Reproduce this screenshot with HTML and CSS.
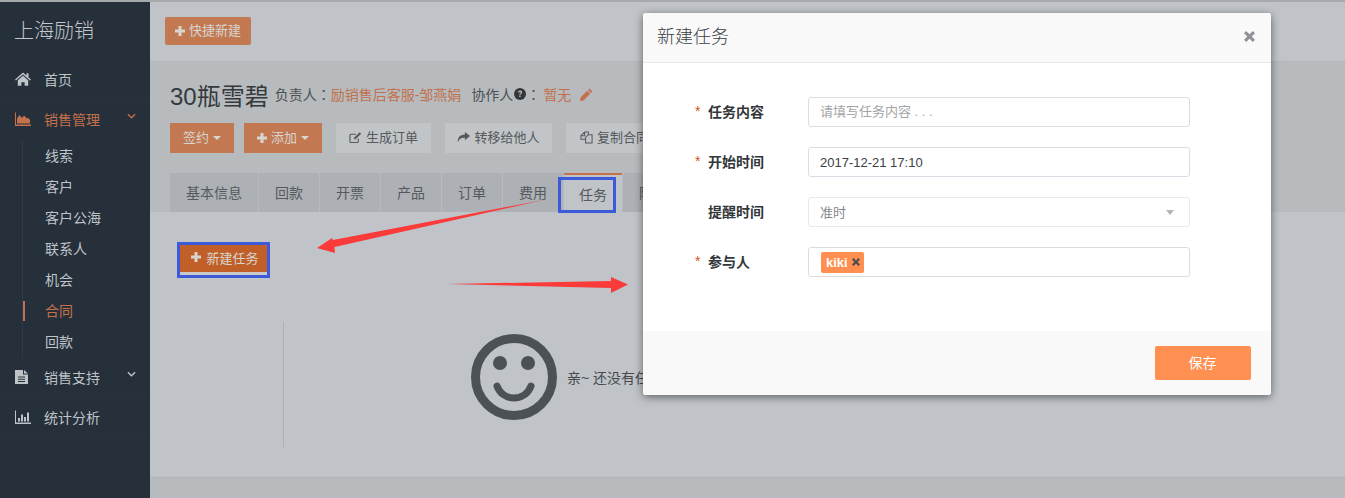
FILE: index.html
```html
<!DOCTYPE html>
<html>
	<head>
		<meta charset="utf-8">
		<title>新建任务</title>
		<link rel="stylesheet" href="styles.css">
	</head>

	<body>
		<div class="app">
			<div class="sidebar">
				<div class="brand">上海励销</div>
				<div class="navItem">
					<svg class="navIcon" viewBox="0 0 16 14"><path d="M8 .5 0 7.6l.9 1L8 2.4l7.100 6.200.9-1-2.500-2.200V1.200h-2v2.200z"/><path d="M2.800 8.300 8 3.800l5.200 4.500v5.400H9.600v-3.500H6.400v3.500H2.800z"/></svg>
					首页
				</div>
				<div class="navItem active">
					<svg class="navIcon" viewBox="0 0 16 14"><path d="M0 .5h1v12h15V14H0z"/><path d="M2 11.500V6.500l2.500-3.500 2.500 3L9 3.500l3 3 1-.8 2 2.300v3.500z"/></svg>
					销售管理
					<svg class="chevron" viewBox="0 0 10 6"><path d="M1 1l4 4 4-4" fill="none" stroke="currentColor" stroke-width="1.500"/></svg>
				</div>
				<div class="subNav">
					<div class="subItem">线索</div>
					<div class="subItem">客户</div>
					<div class="subItem">客户公海</div>
					<div class="subItem">联系人</div>
					<div class="subItem">机会</div>
					<div class="subItem current">合同</div>
					<div class="subItem">回款</div>
				</div>
				<div class="navItem">
					<svg class="navIcon docIcon" viewBox="0 0 13 14"><path fill-rule="evenodd" d="M0 0h8v4.500h5V14H0zM3 6.500v1h7v-1zM3 8.700v1h7v-1zM3 10.900v1h7v-1z"/><path d="M9 0l4 3.500H9z"/></svg>
					销售支持
					<svg class="chevron" viewBox="0 0 10 6"><path d="M1 1l4 4 4-4" fill="none" stroke="currentColor" stroke-width="1.500"/></svg>
				</div>
				<div class="navItem">
					<svg class="navIcon" viewBox="0 0 16 14"><path d="M0 .5h1v12h15V14H0z"/><path d="M3 8h2v3.500H3zM6 4.500h2v7H6zM9 7h2v4.500H9zM12 2.500h2v9h-2z"/></svg>
					统计分析
				</div>
			</div>

			<div class="main">
				<div class="topbar">
					<button class="btn btnOrange quick">
						<svg class="plus" viewBox="0 0 10 10"><path d="M3.500 0h3v3.500H10v3H6.500V10h-3V6.500H0v-3h3.500z"/></svg>
						快捷新建
					</button>
				</div>

				<div class="detailHead">
					<div class="titleRow">
						<span class="title">30瓶雪碧</span>
						<span class="meta">负责人<span class="colon">：</span></span><span class="metaLink">励销售后客服-邹燕娟</span>
						<span class="meta helper">协作人</span>
						<svg class="help" viewBox="0 0 14 14"><circle cx="7" cy="7" r="7"/><path d="M4.600 5.300C4.700 3.800 5.700 3 7.100 3c1.400 0 2.400.8 2.400 2 0 1-.6 1.500-1.300 1.900-.5.300-.6.500-.6 1.100H6.100c0-1 .3-1.500 1-2 .5-.3.800-.5.800-.9 0-.4-.3-.7-.8-.7s-.9.300-.9.900zM6.100 8.800h1.600v1.700H6.100z" fill="#b7bbbe"/></svg>
						<span class="meta colon">：</span>
						<span class="metaLink none">暂无</span>
						<svg class="pencil" viewBox="0 0 13 13"><path d="M9.500.5l3 3-1.500 1.500-3-3zM7.200 2.800l3 3L3.500 12.500l-3.500.5.500-3.500z"/></svg>
					</div>

					<div class="actions">
						<button class="btn btnOrange sign">签约<i class="caret"></i></button>
						<button class="btn btnOrange add">
							<svg class="plus" viewBox="0 0 10 10"><path d="M3.500 0h3v3.500H10v3H6.500V10h-3V6.500H0v-3h3.500z"/></svg>
							添加<i class="caret"></i>
						</button>
						<button class="btn btnGrey order">
							<svg class="btnIcon" viewBox="0 0 14 13"><path d="M10 7.500v3.200c0 .7-.5 1.200-1.200 1.200H2.200C1.500 11.900 1 11.400 1 10.700V4.200C1 3.500 1.500 3 2.200 3h5.300" fill="none" stroke="currentColor" stroke-width="1.200"/><path d="M11.500.8l1.600 1.600-5.800 5.800-2.100.5.500-2.100z"/></svg>
							生成订单
						</button>
						<button class="btn btnGrey transfer">
							<svg class="btnIcon" viewBox="0 0 14 12"><path d="M8.500 0L14 4.500 8.500 9V6.300C4.500 6.300 2.200 7.300 1 11.500.2 6 3 2.900 8.500 2.700z"/></svg>
							转移给他人
						</button>
						<button class="btn btnGrey copy">
							<svg class="btnIcon" viewBox="0 0 14 14"><path d="M5 1h4v3h4v9H6V9H1V5z M5 1v4H1 M9 4L6 7v2" fill="none" stroke="currentColor" stroke-width="1.100"/></svg>
							复制合同
						</button>
					</div>

					<div class="tabs">
						<div class="tab wide">基本信息</div>
						<div class="tab">回款</div>
						<div class="tab">开票</div>
						<div class="tab">产品</div>
						<div class="tab">订单</div>
						<div class="tab">费用</div>
						<div class="tab selected">任务</div>
						<div class="tab">附件</div>
					</div>
				</div>

				<div class="content">
					<button class="newTask">
						<svg class="plus" viewBox="0 0 10 10"><path d="M3.500 0h3v3.500H10v3H6.500V10h-3V6.500H0v-3h3.500z"/></svg>
						新建任务
					</button>
					<div class="emptyWrap">
						<div class="empty">
							<svg class="smile" viewBox="0 0 86 86">
								<circle cx="43" cy="43" r="38.500" fill="none" stroke="#4c5155" stroke-width="9"/>
								<circle cx="29" cy="29" r="7" fill="#4c5155"/>
								<circle cx="57" cy="29" r="7" fill="#4c5155"/>
								<path d="M26 52A18 18 0 0 0 60 52" fill="none" stroke="#4c5155" stroke-width="7" stroke-linecap="round"/>
							</svg>
							<span class="emptyText">亲~ 还没有任务哦</span>
						</div>
					</div>
				</div>

				<div class="footer"></div>
			</div>
		</div>

		<!-- red arrows and blue boxes drawn over the screenshot -->
		<svg class="arrows" viewBox="0 0 1345 498">
			<polygon points="546,199.500 333,240 332,238 317,248 335,253 334.500,247" fill="#fb3a3a"/>
			<polygon points="447,284 611,281 611,277 628,284.500 611,293 611,288" fill="#fb3a3a"/>
		</svg>
		<div class="mark markTab"></div>
		<div class="mark markBtn"></div>

		<div class="modal">
			<div class="modalHead">
				<span class="modalTitle">新建任务</span>
				<svg class="close" viewBox="0 0 11 11"><path d="M2.200 0L5.500 3.300 8.800 0 11 2.200 7.700 5.500 11 8.800 8.800 11 5.500 7.700 2.200 11 0 8.800 3.300 5.500 0 2.200z"/></svg>
			</div>
			<div class="modalBody">
				<label class="fieldLabel"><i class="star">*</i>任务内容</label>
				<input class="field hintField" type="text" placeholder="请填写任务内容 . . .">

				<label class="fieldLabel"><i class="star">*</i>开始时间</label>
				<input class="field" type="text" value="2017-12-21 17:10">

				<label class="fieldLabel"><i class="star"></i>提醒时间</label>
				<div class="field select">准时<i class="selectCaret"></i></div>

				<label class="fieldLabel"><i class="star">*</i>参与人</label>
				<div class="field people">
					<span class="tag">kiki
						<svg class="tagClose" viewBox="0 0 11 11"><path d="M2.200 0L5.500 3.300 8.800 0 11 2.200 7.700 5.500 11 8.800 8.800 11 5.500 7.700 2.200 11 0 8.800 3.300 5.500 0 2.200z"/></svg>
					</span>
				</div>
			</div>
			<div class="modalFoot">
				<button class="save">保存</button>
			</div>
		</div>
	</body>
</html>
```

FILE: styles.css
```css
html, body {
	margin: 0px;
	padding: 0px;
	overflow: hidden;
	height: 498px;
	font-family: "Liberation Sans", "Noto Sans CJK SC", sans-serif;
	font-size: 14px;
	color: #3c4043;
	background: #c0c4c8;
}

button {
	font-family: inherit;
	border: none;
	padding: 0px;
}

.app {
	display: flex;
	height: 496px;
	border-top: 2px solid #a6aaad;
}

/* sidebar */
.sidebar {
	width: 150px;
	flex: none;
	background: #26303b;
	color: #bfc4c9;
}

.brand {
	height: 58px;
	line-height: 59px;
	padding-left: 14px;
	font-size: 20px;
	font-weight: 300;
	color: #c4c8cc;
}

.navItem {
	position: relative;
	display: flex;
	align-items: center;
	height: 40px;
	padding: 0px 0px 2px 15px;
	border-bottom: 1px solid #29333e;
	box-sizing: border-box;
}

.navIcon {
	width: 16px;
	height: 14px;
	margin-right: 13px;
	fill: currentColor;
}

.docIcon {
	width: 13px;
	margin-right: 16px;
}

.navItem.active {
	color: #c4704a;
	border-bottom: none;
}

.chevron {
	width: 9px;
	height: 6px;
	margin: -6px 0px 0px 27px;
}

.subNav {
	margin-left: 22px;
	padding-top: 1px;
	border-left: 1px solid #2f3a46;
}

.subItem {
	position: relative;
	height: 31px;
	line-height: 30px;
	padding-left: 22px;
}

.subItem.current {
	color: #c4704a;
}

.subItem.current::before {
	content: "";
	position: absolute;
	left: 0px;
	top: 5px;
	width: 2px;
	height: 20px;
	background: #c4704a;
}

/* main column */
.main {
	flex: 1;
	display: flex;
	flex-direction: column;
	min-width: 0;
}

.topbar {
	flex: none;
	height: 60px;
	padding: 15px 0px 0px 15px;
	box-sizing: border-box;
	border-bottom: 1px solid #b3b7ba;
	background: #c0c4c8;
}

.btn {
	display: inline-flex;
	align-items: center;
	justify-content: center;
	height: 30px;
	padding-bottom: 3px;
	font-size: 13px;
	box-sizing: border-box;
}

.btn svg, .btn i {
	position: relative;
	top: 1px;
}

.btnOrange {
	background: #c27850;
	color: #d8d4d0;
}

.btnGrey {
	background: #c1c5c8;
	color: #55595c;
}

.quick {
	width: 86px;
	height: 28px;
	border-radius: 2px;
}

.plus {
	width: 10px;
	height: 10px;
	margin-right: 4px;
	fill: currentColor;
}

.detailHead {
	flex: none;
	height: 150px;
	padding: 16px 0px 0px 20px;
	box-sizing: border-box;
	background: #b7bbbe;
}

.titleRow {
	display: flex;
	align-items: center;
	height: 34px;
	padding-bottom: 2px;
	box-sizing: border-box;
	white-space: nowrap;
}

.title {
	font-size: 24px;
	margin-right: 6px;
	color: #35393c;
}

.meta {
	color: #4c5053;
}

/* TC face has the colon centred in its box */
.colon {
	font-family: "Noto Sans CJK TC", sans-serif;
}

.metaLink {
	color: #c2714e;
}

.helper {
	margin-left: 10px;
}

.help {
	width: 12px;
	height: 12px;
	margin-left: 1px;
	fill: #33373a;
}

.none {
	margin-left: 3px;
}

.pencil {
	width: 13px;
	height: 13px;
	margin-left: 9px;
	fill: #c2714e;
}

.actions {
	display: flex;
	margin-top: 11px;
	white-space: nowrap;
}

.sign {
	width: 64px;
	margin-right: 10px;
}

.add {
	width: 78px;
	margin-right: 14px;
}

.order {
	width: 95px;
	margin-right: 14px;
}

.transfer {
	width: 107px;
	margin-right: 14px;
}

.copy {
	width: 110px;
	justify-content: flex-start;
	padding-left: 14px;
}

.caret {
	width: 0px;
	height: 0px;
	margin-left: 4px;
	border-top: 4px solid currentColor;
	border-left: 4px solid transparent;
	border-right: 4px solid transparent;
}

.btnIcon {
	width: 13px;
	height: 13px;
	margin-right: 4px;
	fill: currentColor;
}

.tabs {
	display: flex;
	gap: 1px;
	margin-top: 20px;
}

.tab {
	width: 60px;
	height: 40px;
	line-height: 40px;
	text-align: center;
	background: #adb1b5;
	color: #55595c;
	box-sizing: border-box;
}

.tab.wide {
	width: 88px;
}

.tab.selected {
	width: 58px;
	line-height: 41px;
	background: #c0c4c8;
	border-top: 2px solid #c4704a;
}

.content {
	flex: 1;
	padding: 32px 0px 0px 30px;
	box-sizing: border-box;
	background: #c0c4c8;
}

.newTask {
	display: flex;
	align-items: center;
	justify-content: center;
	width: 87px;
	height: 28px;
	padding: 0px 0px 2px 3px;
	box-sizing: border-box;
	font-size: 13px;
	background: #c06028;
	color: #d8d4d0;
	box-shadow: 0px 3px 0px #c9c9c9;
}

.newTask .plus {
	margin-right: 5px;
}

.emptyWrap {
	height: 125px;
	margin: 50px 0px 0px 103px;
	border-left: 1px solid #adb1b4;
}

.empty {
	display: flex;
	align-items: center;
	padding: 12px 0px 0px 187px;
	white-space: nowrap;
}

.smile {
	width: 86px;
	height: 86px;
	flex: none;
}

.emptyText {
	margin-left: 10px;
	font-size: 14px;
	color: #45494c;
}

.footer {
	flex: none;
	height: 21px;
	box-sizing: border-box;
	border-top: 1px solid #afb3b6;
	background: #b7bbbe;
}

/* annotations on top of the page */
.arrows {
	position: absolute;
	left: 0px;
	top: 0px;
	width: 1345px;
	height: 498px;
}

.mark {
	position: absolute;
	border: 3px solid #3b5bdb;
	box-sizing: border-box;
}

.markTab {
	left: 558px;
	top: 177px;
	width: 58px;
	height: 36px;
}

.markBtn {
	left: 177px;
	top: 242px;
	width: 93px;
	height: 36px;
}

/* dialog */
.modal {
	position: absolute;
	left: 643px;
	top: 13px;
	width: 628px;
	height: 382px;
	display: flex;
	flex-direction: column;
	background: #fff;
	border-radius: 3px;
	box-shadow: 0px 2px 8px rgba(0,0,0,0.5);
	overflow: hidden;
}

.modalHead {
	display: flex;
	align-items: center;
	justify-content: space-between;
	flex: none;
	height: 50px;
	padding: 0px 16px 3px 14px;
	box-sizing: border-box;
	background: #f9f9f9;
	border-bottom: 1px solid #e5e7ea;
}

.modalTitle {
	font-size: 18px;
	font-weight: 300;
	color: #3c4043;
	margin-top: -3px;
}

.close {
	width: 11px;
	height: 11px;
	fill: #8f9397;
}

.modalBody {
	flex: 1;
	display: grid;
	grid-template-columns: 165px 382px;
	grid-auto-rows: 30px;
	row-gap: 20px;
	padding-top: 34px;
}

.fieldLabel {
	display: flex;
	align-items: center;
	padding: 0px 0px 2px 52px;
	font-weight: bold;
	color: #33373a;
}

.star {
	width: 13px;
	font-style: normal;
	font-weight: normal;
	color: #d9531e;
}

.field {
	width: 382px;
	height: 30px;
	padding: 0px 11px;
	box-sizing: border-box;
	border: 1px solid #d8dde6;
	border-radius: 3px;
	font-family: inherit;
	font-size: 13px;
	color: #3c4043;
	outline: none;
}

.hintField {
	padding-bottom: 2px;
}

.field::placeholder {
	color: #a2a5a8;
}

.select {
	display: flex;
	align-items: center;
	justify-content: space-between;
	padding-bottom: 2px;
	border-color: #e8e9eb;
	color: #85888b;
}

.selectCaret {
	width: 0px;
	height: 0px;
	margin: 2px 4px 0px 0px;
	border-top: 5px solid #b5b5b5;
	border-left: 4px solid transparent;
	border-right: 4px solid transparent;
}

.people {
	display: flex;
	align-items: center;
	padding-left: 12px;
	border-color: #dcdcdc;
}

.tag {
	display: inline-flex;
	align-items: center;
	width: 43px;
	height: 21px;
	padding: 0px 0px 0px 5px;
	box-sizing: border-box;
	border-radius: 2px;
	background: #ff8f50;
	color: #fff;
	font-weight: bold;
	font-size: 13px;
}

.tagClose {
	width: 8px;
	height: 8px;
	margin-left: 4px;
	fill: #4d4d4d;
}

.modalFoot {
	display: flex;
	justify-content: flex-end;
	align-items: flex-start;
	flex: none;
	height: 64px;
	padding: 15px 20px 0px 0px;
	box-sizing: border-box;
	background: #f9f9f9;
}

.save {
	width: 96px;
	height: 34px;
	padding: 0px 1px 2px 0px;
	box-sizing: border-box;
	border-radius: 2px;
	background: #ff9052;
	color: #fff;
	font-size: 14px;
}
```
